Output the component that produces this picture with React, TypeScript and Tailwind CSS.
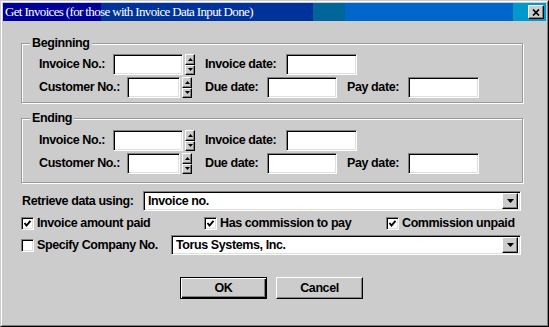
import React from 'react'

const raised =
  'bg-[#cccccc] border border-t-white border-l-white border-b-black border-r-black shadow-[inset_-1px_-1px_0_#808080]'
const sunken =
  'bg-white border border-t-[#808080] border-l-[#808080] border-b-white border-r-white shadow-[inset_1px_1px_0_#000,inset_-1px_-1px_0_#dfdfdf]'

function Input({ className }: { className: string }) {
  return <div className={`${sunken} h-[21px] shrink-0 ${className}`} />
}

function Spinner({ className }: { className: string }) {
  return (
    <div className={`flex h-[21px] w-[10px] shrink-0 flex-col ${className}`}>
      <div className={`${raised} flex flex-1 items-center justify-center`}>
        <svg width="5" height="3" viewBox="0 0 5 3">
          <path d="M2.5 0L5 3H0z" fill="#000" />
        </svg>
      </div>
      <div className={`${raised} flex flex-1 items-center justify-center`}>
        <svg width="5" height="3" viewBox="0 0 5 3">
          <path d="M0 0h5L2.5 3z" fill="#000" />
        </svg>
      </div>
    </div>
  )
}

function Check({ on }: { on: boolean }) {
  return (
    <div className={`${sunken} flex h-[13px] w-[13px] shrink-0 items-center justify-center`}>
      {on && (
        <svg width="9" height="9" viewBox="0 0 9 9">
          <path d="M1.5 4L3.5 6.5L7.5 1.8" stroke="#000" strokeWidth="1.9" fill="none" />
        </svg>
      )}
    </div>
  )
}

function Select({ text, className }: { text: string; className: string }) {
  return (
    <div className={`${sunken} flex h-[20px] shrink-0 items-center justify-between pl-[4px] pr-[2px] ${className}`}>
      <span className="leading-none">{text}</span>
      <div className={`${raised} flex h-[16px] w-[16px] items-center justify-center`}>
        <svg width="7" height="4" viewBox="0 0 7 4">
          <path d="M0 0h7L3.5 4z" fill="#000" />
        </svg>
      </div>
    </div>
  )
}

function Group({ title, className }: { title: string; className: string }) {
  return (
    <div
      className={`relative w-[502px] border border-[#999999] pl-[17px] shadow-[inset_1px_1px_0_#fff,1px_1px_0_#fff] ${className}`}
    >
      <span className="absolute -top-[9px] left-[8px] bg-[#cccccc] px-[2px] leading-[16px]">{title}</span>
      <div className="flex h-[21px] items-center">
        <span className="w-[74px] shrink-0 whitespace-nowrap">Invoice No.:</span>
        <Input className="w-[70px]" />
        <Spinner className="ml-[2px]" />
        <span className="ml-[10px] w-[81px] shrink-0 whitespace-nowrap">Invoice date:</span>
        <Input className="w-[71px]" />
      </div>
      <div className="mt-[2px] flex h-[21px] items-center">
        <span className="w-[88px] shrink-0 whitespace-nowrap">Customer No.:</span>
        <Input className="w-[53px]" />
        <Spinner className="ml-[2px]" />
        <span className="ml-[13px] w-[62px] shrink-0 whitespace-nowrap">Due date:</span>
        <Input className="w-[70px]" />
        <span className="ml-[10px] w-[61px] shrink-0 whitespace-nowrap">Pay date:</span>
        <Input className="w-[71px]" />
      </div>
    </div>
  )
}

export default function App() {
  return (
    <div className="h-[327px] w-[549px] border border-t-[#cccccc] border-l-[#cccccc] border-b-black border-r-black bg-[#cccccc] font-['Liberation_Sans',Arial,sans-serif] text-[12.5px] font-bold tracking-[-0.4px] text-black">
      <div className="flex h-full flex-col border border-t-white border-l-white border-b-[#808080] border-r-[#808080] p-[1px]">
        <div className="flex h-[18px] shrink-0 items-center justify-between bg-[linear-gradient(90deg,#000099_0px,#000099_98px,#003399_98px,#003399_310px,#006699_310px,#006699_342px,#0066cc_342px,#0066cc_510px,#0099cc_510px)]">
          <span className="pl-[2px] font-['Liberation_Serif','Times_New_Roman',serif] text-[13px] font-normal leading-[18px] tracking-[-0.65px] text-white">
            Get Invoices (for those with Invoice Data Input Done)
          </span>
          <div className={`${raised} mr-[2px] flex h-[14px] w-[16px] items-center justify-center`}>
            <svg width="8" height="7" viewBox="0 0 8 7">
              <path d="M1 0.5L7 6.5M7 0.5L1 6.5" stroke="#000" strokeWidth="1.7" />
            </svg>
          </div>
        </div>

        <div className="flex flex-1 flex-col pl-[18px] pt-[22px]">
          <Group title="Beginning" className="pb-[4px] pt-[10px]" />
          <Group title="Ending" className="mt-[15px] pb-[8px] pt-[11px]" />

          <div className="mt-[8px] flex h-[20px] items-center">
            <span className="w-[122px] shrink-0 whitespace-nowrap pl-[1px]">Retrieve data using:</span>
            <Select text="Invoice no." className="w-[378px]" />
          </div>

          <div className="mt-[6px] flex h-[13px] items-center">
            <div className="flex w-[183px] shrink-0 items-center gap-[3px]">
              <Check on />
              <span className="whitespace-nowrap">Invoice amount paid</span>
            </div>
            <div className="flex w-[182px] shrink-0 items-center gap-[3px]">
              <Check on />
              <span className="whitespace-nowrap">Has commission to pay</span>
            </div>
            <div className="flex items-center gap-[3px]">
              <Check on />
              <span className="whitespace-nowrap">Commission unpaid</span>
            </div>
          </div>

          <div className="mt-[5px] flex h-[20px] items-center">
            <div className="flex w-[150px] shrink-0 items-center gap-[3px]">
              <Check on={false} />
              <span className="whitespace-nowrap">Specify Company No.</span>
            </div>
            <Select text="Torus Systems, Inc." className="w-[350px]" />
          </div>

          <div className="mt-[22px] flex">
            <button className="ml-[159px] flex h-[22px] w-[87px] items-center justify-center border border-black bg-[#cccccc] shadow-[inset_1px_1px_0_#fff,inset_-1px_-1px_0_#000,inset_-2px_-2px_0_#808080]">
              OK
            </button>
            <button className={`${raised} ml-[9px] flex h-[22px] w-[87px] items-center justify-center`}>
              Cancel
            </button>
          </div>
        </div>
      </div>
    </div>
  )
}
